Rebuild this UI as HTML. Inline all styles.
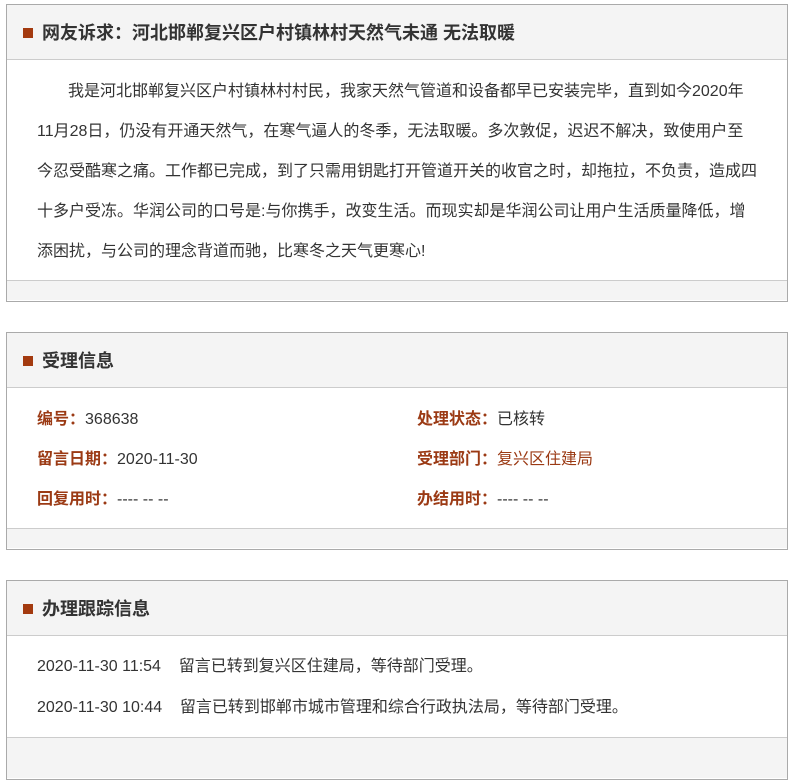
<!DOCTYPE html>
<html><head><meta charset="utf-8"><style>
*{margin:0;padding:0;box-sizing:border-box}
body{width:790px;height:744px;overflow:hidden;background:#fff;font-family:"Liberation Sans","Microsoft YaHei","Noto Sans CJK SC",sans-serif;color:#333;font-size:16px;position:relative}
.box{position:absolute;left:6px;width:782px;border:1px solid #aaa;background:#fff}
.hd{height:55px;background:#f4f4f4;border-bottom:1px solid #ccc;position:relative}
.hd i{position:absolute;left:16px;top:23px;width:10px;height:10px;background:#a33a0f}
.hd b{position:absolute;left:35px;top:17px;font-size:18px;color:#333;line-height:22px;white-space:nowrap}
.ft{height:20px;background:#f4f4f4;border-top:1px solid #ccc}
.ln{position:absolute;white-space:nowrap;line-height:20px}
.lb{color:#9b3a14;font-weight:bold}
.rd{color:#9b3a14}
</style></head><body>
<div class="box" style="top:4px;height:298px">
 <div class="hd"><i></i><b>网友诉求：河北邯郸复兴区户村镇林村天然气未通 无法取暖</b></div>
 <div style="height:220px;position:relative">
  <div class="ln" style="left:61px;top:22px">我是河北邯郸复兴区户村镇林村村民，我家天然气管道和设备都早已安装完毕，直到如今2020年</div>
  <div class="ln" style="left:30px;top:62px">11月28日，仍没有开通天然气，在寒气逼人的冬季，无法取暖。多次敦促，迟迟不解决，致使用户至</div>
  <div class="ln" style="left:30px;top:102px">今忍受酷寒之痛。工作都已完成，到了只需用钥匙打开管道开关的收官之时，却拖拉，不负责，造成四</div>
  <div class="ln" style="left:30px;top:142px">十多户受冻。华润公司的口号是:与你携手，改变生活。而现实却是华润公司让用户生活质量降低，增</div>
  <div class="ln" style="left:30px;top:182px">添困扰，与公司的理念背道而驰，比寒冬之天气更寒心!</div>
 </div>
 <div class="ft"></div>
</div>
<div class="box" style="top:332px;height:218px">
 <div class="hd"><i></i><b>受理信息</b></div>
 <div style="height:140px;position:relative">
  <div class="ln" style="left:30px;top:22px"><span class="lb">编号：</span>368638</div>
  <div class="ln" style="left:410px;top:22px"><span class="lb">处理状态：</span>已核转</div>
  <div class="ln" style="left:30px;top:62px"><span class="lb">留言日期：</span>2020-11-30</div>
  <div class="ln" style="left:410px;top:62px"><span class="lb">受理部门：</span><span class="rd">复兴区住建局</span></div>
  <div class="ln" style="left:30px;top:102px"><span class="lb">回复用时：</span>---- -- --</div>
  <div class="ln" style="left:410px;top:102px"><span class="lb">办结用时：</span>---- -- --</div>
 </div>
 <div class="ft"></div>
</div>
<div class="box" style="top:580px;height:200px">
 <div class="hd"><i></i><b>办理跟踪信息</b></div>
 <div style="height:102px;position:relative;border-bottom:1px solid #ccc">
  <div class="ln" style="left:30px;top:21px">2020-11-30 11:54&nbsp;&nbsp;&nbsp;&nbsp;留言已转到复兴区住建局，等待部门受理。</div>
  <div class="ln" style="left:30px;top:62px">2020-11-30 10:44&nbsp;&nbsp;&nbsp;&nbsp;留言已转到邯郸市城市管理和综合行政执法局，等待部门受理。</div>
 </div>
 <div style="height:40px;background:#f4f4f4"></div>
</div>
</body></html>
